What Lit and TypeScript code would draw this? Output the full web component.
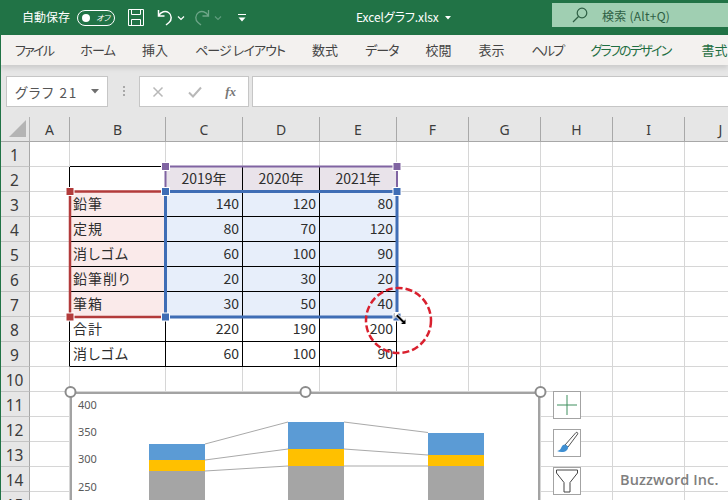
import { LitElement, html, css, svg } from "lit";
import { customElement } from "lit/decorators.js";

const COLS = ["A", "B", "C", "D", "E", "F", "G", "H", "I", "J"];
const DATA: (string | number)[][] = [
  ["", "2019年", "2020年", "2021年"],
  ["鉛筆", 140, 120, 80],
  ["定規", 80, 70, 120],
  ["消しゴム", 60, 100, 90],
  ["鉛筆削り", 20, 30, 20],
  ["筆箱", 30, 50, 40],
  ["合計", 220, 190, 200],
  ["消しゴム", 60, 100, 90],
];
const TABS: [string, number, boolean][] = [
  ["ファイル", -1.7, false],
  ["ホーム", -0.8, false],
  ["挿入", 0, false],
  ["ページ レイアウト", -0.9, false],
  ["数式", 0, false],
  ["データ", -1, false],
  ["校閲", 0, false],
  ["表示", 0, false],
  ["ヘルプ", -1.8, false],
  ["グラフのデザイン", -1.75, true],
  ["書式", 0, true],
];

@customElement("app-root")
export class AppRoot extends LitElement {
  static styles = css`
    :host {
      display: block; width: 728px; height: 500px; overflow: hidden; position: relative;
      background: #fff; color: #262626;
      font-family: "Noto Sans CJK JP", "Noto Sans", sans-serif;
      font-feature-settings: "palt";
    }
    :host::before { content: ""; position: absolute; left: 0; top: 0; bottom: 0; width: 1px; background: #217346; z-index: 5; }
    .title { height: 35px; background: #217346; color: #fff; display: flex; align-items: center; font-size: 12px; padding-left: 22px; box-sizing: border-box; }
    .title > span { position: relative; top: -1px; }
    .title svg { display: block; flex: none; }
    .toggle { width: 38px; height: 16px; box-sizing: border-box; border: 1px solid #fff; border-radius: 9px; margin-left: 7px; display: flex; align-items: center; padding-left: 4px; font-size: 8px; gap: 6px; font-style: italic; }
    .toggle i { width: 8px; height: 8px; border-radius: 50%; background: #fff; display: block; }
    .save { margin-left: 13px; }
    .undo { margin-left: 13px; }
    .redo { margin-left: 9px; }
    .chev { margin-left: 4px; }
    .qat { margin-left: 16px; }
    .fname { margin-left: 110px; white-space: nowrap; width: 82px; letter-spacing: -.1px; }
    .caret { margin-left: 7px; }
    .search { margin-left: 101px; flex: 1; height: 24px; margin-top: -5px; background: #a0cfb2; color: #2e5f44; display: flex; align-items: center; font-size: 12px; padding-left: 20px; }
    .search span { margin-left: 14px; letter-spacing: .25px; }
    .tabs { height: 30px; padding-bottom: 2px; box-sizing: border-box; background: #f3f1ef; display: flex; align-items: center; gap: 27px; padding-left: 15px; font-size: 13px; color: #444; white-space: nowrap; overflow: hidden; box-shadow: 0 3px 5px rgba(0,0,0,.12); position: relative; z-index: 2; }
    .tabs .ctx { color: #1e6e42; }
    .tabs .ctx + .ctx { margin-left: 4px; }
    .fbar { height: 52px; background: #e6e6e6; display: flex; align-items: flex-start; padding: 11px 0 0 6px; box-sizing: border-box; }
    .box { height: 31px; box-sizing: border-box; background: #fff; border: 1px solid #c6c6c6; display: flex; align-items: center; }
    .name { width: 102px; font-size: 13.5px; color: #555; padding: 0 8px 0 8px; justify-content: space-between; letter-spacing: 1.6px; }
    .dots { width: 31px; display: flex; flex-direction: column; align-items: center; gap: 2px; padding-top: 10px; }
    .dots i { width: 2px; height: 2px; background: #a8a8a8; display: block; }
    .fx { width: 110px; padding: 0 12px; justify-content: space-between; color: #b5b5b5; }
    .fx b { font: italic bold 13px "Liberation Serif", serif; color: #777; }
    .input { flex: 1; margin-left: 3px; border-right: 0; }
    .sheet { position: absolute; left: 0; top: 117px; width: 728px; height: 383px; overflow: hidden; }
    .grid { display: grid; grid-template-columns: 30px 40px 96px 77px 77px 77px repeat(5, 72px); grid-template-rows: 25px repeat(15, 25px); width: 800px; }
    .h { background: #e6e6e6; border-right: 1px solid #a8a8a8; border-bottom: 1px solid #a8a8a8; box-sizing: border-box; display: flex; align-items: center; justify-content: center; font: 14px "Noto Sans", sans-serif; color: #3c3c3c; }
    .corner { position: relative; border-right: 1px solid #b4b4b4; }
    .corner svg { position: absolute; left: 9px; top: 3px; }
    .rh { font-size: 15.5px; padding-top: 1px; border-right-color: #a8a8a8; border-bottom-color: #c4c4c4; }
    .c { box-sizing: border-box; border-right: 1px solid #d6d6d6; border-bottom: 1px solid #d6d6d6; font-size: 14px; color: #2e2e2e; display: flex; align-items: center; padding: 0 3px 3px; white-space: nowrap; overflow: visible; min-width: 0; }
    .r { justify-content: flex-end; }
    .ctr { justify-content: center; }
    .bk-r { border-right-color: #000; }
    .bk-b { border-bottom-color: #000; }
    .lab { background: #faeaea; letter-spacing: 1px; }
    .lab.plain { background: transparent; }
    .val { background: #e7eefa; }
    .ser { background: #e9e3ea; }
    .overlay { position: absolute; left: 0; top: 0; pointer-events: none; }
    .chart { position: absolute; left: 70px; top: 275px; width: 470px; height: 140px; box-sizing: border-box; background: #fff; border-left: 2px solid #a3a3a3; border-top: 2px solid #a3a3a3; border-right: 2px solid #a3a3a3; }
    .chart svg { display: block; position: absolute; left: -2px; top: -2px; }
    .chart text { font: 11px "Noto Sans", sans-serif; fill: #595959; }
    .side { position: absolute; left: 553px; top: 274px; display: flex; flex-direction: column; gap: 10px; }
    .side div { width: 28px; height: 28px; box-sizing: border-box; background: #fff; border: 1px solid #a3a3a3; display: flex; align-items: center; justify-content: center; }
    .mark { position: absolute; left: 620px; top: 353px; font: 600 14.5px "Open Sans", sans-serif; color: #7f7f7f; letter-spacing: .1px; }
  `;

  private chev(color = "#fff") {
    return html`<svg class="chev" width="8" height="6" viewBox="0 0 8 6"><path d="M1 1.5l3 3 3-3" fill="none" stroke=${color} stroke-width="1.2"/></svg>`;
  }

  private cell(r: number, c: number) {
    const inRows = r >= 2 && r <= 9;
    const inCols = c >= 1 && c <= 4;
    const cls = ["c"];
    if ((inRows && (inCols || c === 0))) cls.push("bk-r");
    if ((inRows && inCols) || (r === 1 && inCols)) cls.push("bk-b");
    let text: string | number = "";
    if (inRows && inCols) {
      text = DATA[r - 2][c - 1];
      if (r === 2 && c >= 2) cls.push("ser", "ctr");
      else if (c === 1) cls.push(r >= 3 && r <= 7 ? "lab" : "lab plain");
      else { cls.push("r"); if (r <= 7) cls.push("val"); }
    }
    return html`<div class=${cls.join(" ")}>${text}</div>`;
  }

  private handle(x: number, y: number, color: string) {
    return svg`<rect x=${x - 4} y=${y - 4} width="8" height="8" fill=${color} stroke="#fff" stroke-width="1"/>`;
  }

  private ring(x: number, y: number) {
    return svg`<circle cx=${x} cy=${y} r="5" fill="#fff" stroke="#8c8c8c" stroke-width="2"/>`;
  }

  render() {
    const rows = Array.from({ length: 15 }, (_, i) => i + 1);
    return html`
      <div class="title">
        <span>自動保存</span>
        <div class="toggle"><i></i><span>オフ</span></div>
        <svg class="save" width="16" height="17" viewBox="0 0 16 17" fill="none" stroke="#fff" stroke-width="1"><path d="M.5.5h15v16H.5zM3.5.5v5h9v-5M3.5 16.5v-6h9v6"/></svg>
        <svg class="undo" width="16" height="17" viewBox="0 0 16 17" fill="none" stroke="#fff" stroke-width="1.5"><path d="M1.5 1v6h6M1.8 6.5C4 2.5 8.5 1.5 11.5 3.5c3.5 2.400 3.500 7.500.5 10l-3 2.500"/></svg>
        ${this.chev()}
        <svg class="redo" width="16" height="17" viewBox="0 0 16 17" fill="none" stroke="#6da588" stroke-width="1.300"><path d="M14.500 1v6h-6M14.200 6.500C12 2.500 7.500 1.500 4.500 3.500c-3.500 2.400-3.500 7.500-.5 10l3 2.500"/></svg>
        ${this.chev("#5f9c7d")}
        <svg class="qat" width="8" height="8" viewBox="0 0 8 8"><path d="M0 .5h8" stroke="#fff"/><path d="M.5 3.500h7L4 7.500z" fill="#fff"/></svg>
        <span class="fname">Excelグラフ.xlsx</span>
        <svg class="caret" width="6" height="4" viewBox="0 0 6 4"><path d="M0 0h6L3 3.500z" fill="#fff"/></svg>
        <div class="search">
          <svg width="16" height="16" viewBox="0 0 16 16" fill="none" stroke="#2e5f44" stroke-width="1.200"><circle cx="10" cy="6" r="4.800"/><path d="M6.500 9.500L1 15"/></svg>
          <span>検索 (Alt+Q)</span>
        </div>
      </div>
      <div class="tabs">
        ${TABS.map(([t, ls, ctx]) => html`<span class=${ctx ? "ctx" : ""} style="letter-spacing:${ls}px">${t}</span>`)}
      </div>
      <div class="fbar">
        <div class="box name"><span>グラフ 21</span><svg width="8" height="5" viewBox="0 0 8 5"><path d="M0 0h8L4 4.500z" fill="#6e6e6e"/></svg></div>
        <div class="dots"><i></i><i></i><i></i></div>
        <div class="box fx">
          <svg width="12" height="12" viewBox="0 0 12 12"><path d="M1.500 1.500l9 9M10.500 1.500l-9 9" stroke="#b8b8b8" stroke-width="1.500"/></svg>
          <svg width="14" height="12" viewBox="0 0 14 12"><path d="M1 6.500l4 4 8-9" fill="none" stroke="#b8b8b8" stroke-width="2"/></svg>
          <b>fx</b>
        </div>
        <div class="box input"></div>
      </div>
      <div class="sheet">
        <div class="grid">
          <div class="h corner"><svg width="17" height="17" viewBox="0 0 17 17"><path d="M17 0v17H0z" fill="#b4b4b4"/></svg></div>
          ${COLS.map((c) => html`<div class="h">${c}</div>`)}
          ${rows.map((r) => html`
            <div class="h rh">${r}</div>
            ${COLS.map((_, i) => this.cell(r, i))}
          `)}
        </div>
        <svg class="overlay" width="728" height="383" viewBox="0 117 728 383" fill="none">
          <rect x="165.500" y="166.500" width="231.500" height="25" stroke="#8064a2" stroke-width="2"/>
          <rect x="70" y="191.500" width="95.500" height="125.500" stroke="#b23b3b" stroke-width="2.500"/>
          <rect x="165.500" y="191.500" width="231.500" height="125.500" stroke="#3f6db5" stroke-width="3"/>
          ${this.handle(165.500, 166.500, "#8064a2")}
          ${this.handle(397, 166.500, "#8064a2")}
          ${this.handle(70, 191.500, "#b23b3b")}
          ${this.handle(70, 317, "#b23b3b")}
          ${this.handle(165.500, 191.500, "#3f6db5")}
          ${this.handle(397, 191.500, "#3f6db5")}
          ${this.handle(165.500, 317, "#3f6db5")}
          ${this.handle(397, 317, "#3f6db5")}
          <circle cx="398.500" cy="320.500" r="32.500" stroke="#d9202e" stroke-width="2.500" stroke-dasharray="7 3"/>
          <path d="M394 312.500h6l-2 2 6 6 2-2v6h-6l2-2-6-6-2 2z" fill="#000" stroke="#fff" stroke-width="1"/>
          <path d="M394.500 313h4.500l-4.500 4.500z" fill="#fff"/>
        </svg>
        <div class="chart">
          <svg width="470" height="140" viewBox="0 0 470 140">
            <text x="8" y="17">400</text>
            <text x="8" y="44">350</text>
            <text x="8" y="71">300</text>
            <text x="8" y="99">250</text>
            <g fill="none" stroke="#a9a9a9" stroke-width="1">
              <path d="M135 52l83-22M135 68l83-11M135 79l83-5"/>
              <path d="M274 30l84 10.500M274 57l84 6M274 74h84"/>
            </g>
            <rect x="79" y="52" width="56" height="16" fill="#5b9bd5"/>
            <rect x="79" y="68" width="56" height="11" fill="#ffc000"/>
            <rect x="79" y="79" width="56" height="61" fill="#a5a5a5"/>
            <rect x="218" y="30" width="56" height="27" fill="#5b9bd5"/>
            <rect x="218" y="57" width="56" height="17" fill="#ffc000"/>
            <rect x="218" y="74" width="56" height="66" fill="#a5a5a5"/>
            <rect x="358" y="41" width="56" height="22" fill="#5b9bd5"/>
            <rect x="358" y="63" width="56" height="11" fill="#ffc000"/>
            <rect x="358" y="74" width="56" height="66" fill="#a5a5a5"/>
          </svg>
        </div>
        <svg class="overlay" width="728" height="383" viewBox="0 117 728 383" fill="none">
          ${this.ring(70.500, 392)}
          ${this.ring(305.500, 392)}
          ${this.ring(540.500, 392)}
        </svg>
        <div class="side">
          <div><svg width="20" height="20" viewBox="0 0 20 20"><path d="M10 0v20M0 10h20" stroke="#3f8f5f" stroke-width="1"/></svg></div>
          <div><svg width="24" height="24" viewBox="0 0 24 24"><path d="M10 14L21 1.500c1.200-.5 2 .3 1.700 1.500L13 16z" fill="#fff" stroke="#555" stroke-width="1"/><path d="M10 13.500c-3 0-3.500 3-4.500 4.500-.7 1-2 1.700-3.500 2 3 1.500 7.500 1.500 9.500-.5 1.500-1.500 2-3 1.500-4z" fill="#3f8fd2"/></svg></div>
          <div><svg width="22" height="24" viewBox="0 0 22 24"><path d="M.5 1h21v3L14 13.500V23H8v-9.500L.5 4z" fill="#fff" stroke="#444" stroke-width="1"/></svg></div>
        </div>
        <div class="mark">Buzzword Inc.</div>
      </div>
    `;
  }
}
